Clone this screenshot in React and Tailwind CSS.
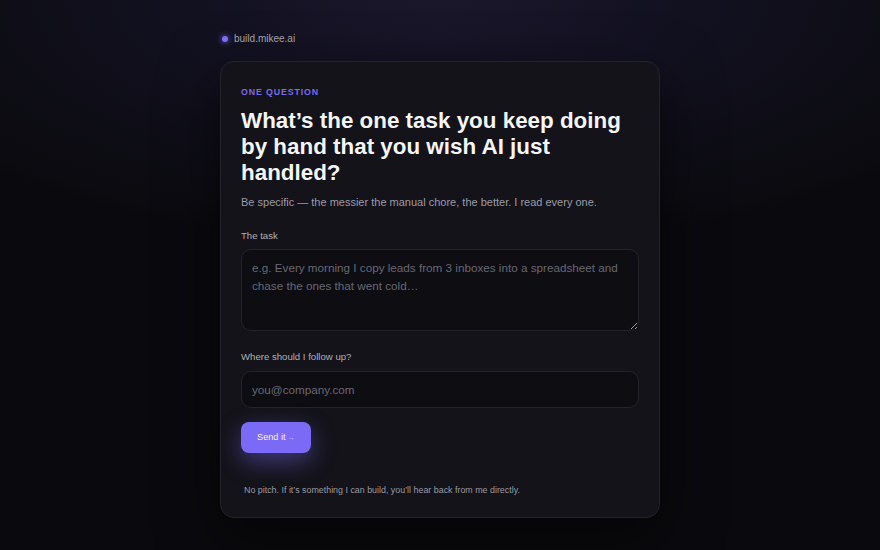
import React from "react";

export default function App() {
  return (
    <div
      className="min-h-[550px] w-full bg-[#0a0a0e] bg-[radial-gradient(ellipse_70%_45%_at_50%_0%,#1a172b_0%,#121120_40%,#0a0a0e_100%)] flex justify-center"
      style={{ fontFamily: '"Liberation Sans", Arial, sans-serif' }}
    >
      <div className="w-[440px] pt-[32px] pb-[32px]">
        <div className="flex items-center gap-[6px] pl-[2px] h-[14px]">
          <span className="w-[6px] h-[6px] rounded-full bg-[#7c6cf6] shadow-[0_0_6px_#7c6cf6]"></span>
          <span className="text-[10px] leading-[14px] text-[#a1a1ab]">build.mikee.ai</span>
        </div>

        <div className="mt-[15px] rounded-[14px] border border-[#23232c] bg-[#131319] shadow-[0_20px_60px_rgba(0,0,0,0.55)] px-[20px] pt-[24px] pb-[21px]">
          <div className="text-[8.8px] leading-[12px] font-bold tracking-[0.1em] text-[#7c6cf0]">
            ONE QUESTION
          </div>
          <h1 className="mt-[10px] text-[22.4px] leading-[26px] font-bold text-[#f5f5f7]">
            What’s the one task you keep doing by hand that you wish AI just handled?
          </h1>
          <p className="mt-[8px] text-[11px] leading-[16px] text-[#9c9ca7]">
            Be specific — the messier the manual chore, the better. I read every one.
          </p>

          <label className="block mt-[19px] text-[9.6px] leading-[14px] text-[#b1b1ba]">
            The task
          </label>
          <textarea
            className="block mt-[6px] w-full h-[82px] rounded-[10px] border border-[#23232c] bg-[#0d0d12] px-[10px] py-[9px] text-[11.7px] leading-[18px] text-[#e5e5ea] placeholder:text-[#686872] outline-none"
            placeholder="e.g. Every morning I copy leads from 3 inboxes into a spreadsheet and chase the ones that went cold…"
            style={{ fontFamily: '"Liberation Sans", Arial, sans-serif' }}
          ></textarea>

          <label className="block mt-[19px] text-[9.6px] leading-[14px] text-[#b1b1ba]">
            Where should I follow up?
          </label>
          <input
            className="block mt-[7px] w-full h-[37px] rounded-[10px] border border-[#23232c] bg-[#0d0d12] px-[10px] text-[11.7px] text-[#e5e5ea] placeholder:text-[#686872] outline-none"
            placeholder="you@company.com"
            style={{ fontFamily: '"Liberation Sans", Arial, sans-serif' }}
          />

          <button
            className="mt-[14px] h-[31px] px-[16px] rounded-[8px] bg-[#7b6af6] text-[9.2px] font-medium text-[#f3f1ff] shadow-[0_8px_24px_rgba(124,106,246,0.45)] flex items-center"
            style={{ fontFamily: '"Liberation Sans", Arial, sans-serif' }}
          >
            <span>Send it</span>
            <span className="ml-[3px] text-[6px] leading-none">→</span>
          </button>

          <p className="mt-[31px] pl-[3px] text-[8.9px] leading-[12px] text-[#9a9aa4]">
            No pitch. If it’s something I can build, you’ll hear back from me directly.
          </p>
        </div>
      </div>
    </div>
  );
}
